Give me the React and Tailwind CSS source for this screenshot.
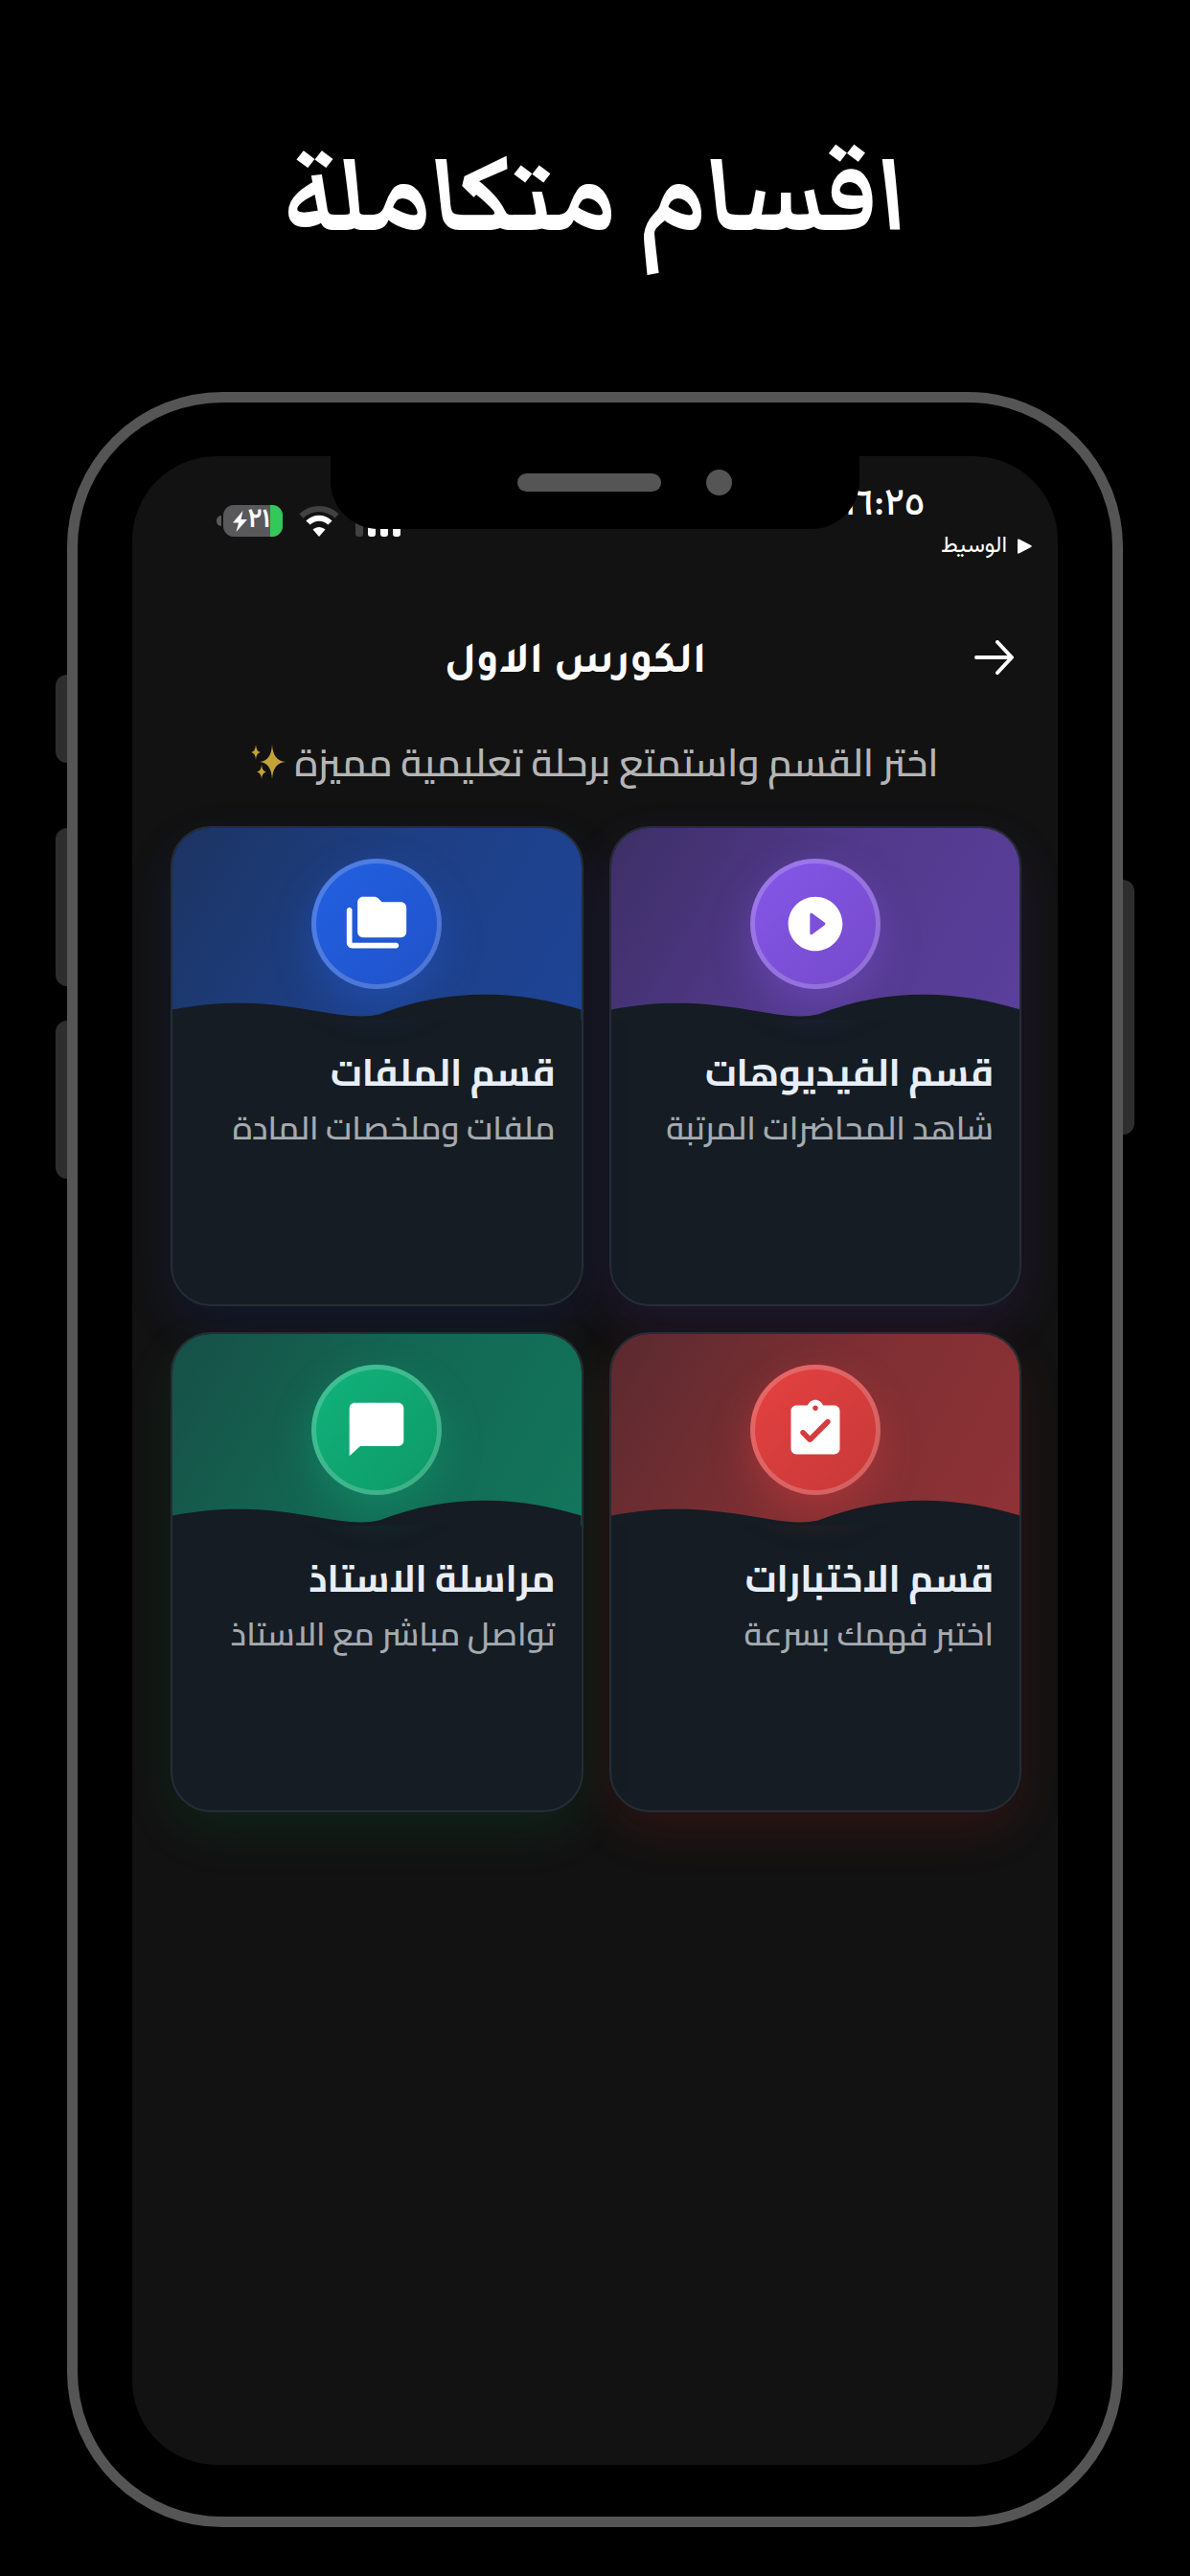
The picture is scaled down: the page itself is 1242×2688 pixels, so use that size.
const sections = [
  {
    id: 'videos',
    title: 'قسم الفيديوهات',
    text: 'شاهد المحاضرات المرتبة',
    glow: 'shadow-[0_20px_50px_rgba(124,58,237,0.13)]',
    header: 'from-[#3d2f66] via-[#52398b] to-[#5a3f9c]',
    circle: 'from-[#8557ea] to-[#7549c9] shadow-[0_16px_40px_rgba(132,86,230,0.35)]',
    icon: 'M12 2C6.48 2 2 6.48 2 12s4.48 10 10 10 10-4.48 10-10S17.52 2 12 2zm-2 13.5v-7c0-.41.47-.65.8-.4l4.67 3.5c.27.2.27.6 0 .8l-4.67 3.5c-.33.25-.8.01-.8-.4z'
  },
  {
    id: 'files',
    title: 'قسم الملفات',
    text: 'ملفات وملخصات المادة',
    glow: 'shadow-[0_20px_50px_rgba(37,70,235,0.13)]',
    header: 'from-[#1c3462] via-[#1e3f85] to-[#1e4496]',
    circle: 'from-[#2260e2] to-[#2052c8] shadow-[0_16px_40px_rgba(34,96,226,0.35)]',
    icon: 'M3 19h16.2c.55 0 1 .45 1 1s-.45 1-1 1H3c-1.1 0-2-.9-2-2V7c0-.55.45-1 1-1s1 .45 1 1v12zM23 6v9c0 1.1-.9 2-2 2H7c-1.1 0-2-.9-2-2V4c0-1.1.9-2 2-2h4.17c.53 0 1.04.21 1.41.59L14 4h7c1.1 0 2 .9 2 2z'
  },
  {
    id: 'exams',
    title: 'قسم الاختبارات',
    text: 'اختبر فهمك بسرعة',
    glow: 'shadow-[0_20px_50px_rgba(220,38,38,0.13)]',
    header: 'from-[#5a2a2f] via-[#7e2f33] to-[#8f3236]',
    circle: 'from-[#e64141] to-[#c63838] shadow-[0_16px_40px_rgba(228,64,64,0.35)]',
    icon: 'M19 3h-4.18C14.4 1.84 13.3 1 12 1s-2.4.84-2.82 2H5c-1.1 0-2 .9-2 2v14c0 1.1.9 2 2 2h14c1.1 0 2-.9 2-2V5c0-1.1-.9-2-2-2zm-7 0c.55 0 1 .45 1 1s-.45 1-1 1-1-.45-1-1 .45-1 1-1zm-2.71 13.29L6.7 13.7c-.39-.39-.39-1.02 0-1.41.39-.39 1.02-.39 1.41 0L10 14.17l5.88-5.88c.39-.39 1.02-.39 1.41 0 .39.39.39 1.02 0 1.41l-6.59 6.59c-.38.39-1.02.39-1.41 0z'
  },
  {
    id: 'messages',
    title: 'مراسلة الاستاذ',
    text: 'تواصل مباشر مع الاستاذ',
    glow: 'shadow-[0_20px_50px_rgba(5,150,80,0.13)]',
    header: 'from-[#165046] via-[#136853] to-[#12765b]',
    circle: 'from-[#11b37c] to-[#0d9968] shadow-[0_16px_40px_rgba(17,176,122,0.35)]',
    icon: 'M20 2H4c-1.1 0-2 .9-2 2v17.6L6 18h14c1.1 0 2-.9 2-2V4c0-1.1-.9-2-2-2z'
  }
]

function SectionCard({ section }) {
  return (
    <a
      href={`#${section.id}`}
      className={`block min-h-[501px] overflow-hidden rounded-[42px] border-2 border-[#262d36] bg-[#151c23] ${section.glow}`}
    >
      <div className={`relative h-[200px] bg-linear-120 pt-8 ${section.header}`}>
        <div className={`mx-auto flex size-[136px] items-center justify-center rounded-full border-[5px] border-white/20 bg-linear-to-br bg-origin-border ${section.circle}`}>
          <svg viewBox="0 0 24 24" className="size-[68px] fill-white">
            <path d={section.icon} />
          </svg>
        </div>
        <svg viewBox="0 0 427 32" preserveAspectRatio="none" className="absolute inset-x-0 bottom-0 h-8 w-full fill-[#151c23]">
          <path d="M0 21.5C110 0 170 37 216 26.5C290 -3 365 2 427 21.5V33H0Z" />
        </svg>
      </div>
      <div className="px-[27px] pt-6">
        <h2 className="text-[39px] leading-[62px] font-bold text-[#e8eef7]">{section.title}</h2>
        <p className="text-[34px] leading-[54px] font-semibold text-[#a5aab0]">{section.text}</p>
      </div>
    </a>
  )
}

function StatusBar() {
  return (
    <div dir="ltr" className="flex h-[127px] items-start justify-between pr-[27px] pl-[88px] text-white">
      <div className="flex items-center pt-[51px]">
        {/* Battery */}
        <div className="h-[11px] w-[5px] rounded-l-full bg-[#59595b]" />
        <div className="ml-[2px] flex h-[33px] w-[62px] items-center justify-end rounded-[11px] bg-[#59595b]">
          <svg viewBox="0 0 15 22" className="h-[22px] w-[15px] fill-white">
            <path d="M10.500 0 0 12.500H6L3.500 22 15 9H8.500Z" />
          </svg>
          <span className="font-['Vazirmatn','Noto_Sans_Arabic',sans-serif] text-[28px] leading-[33px] font-semibold">٢١</span>
          <div className="h-full w-[13px] rounded-r-[11px] bg-[#34c759]" />
        </div>

        {/* Wifi */}
        <svg viewBox="0 0 42 32" className="ml-[17px] h-8 w-[42px]" fill="none">
          <path d="M2.500 10.500C13 .5 29 .5 39.500 10.500" stroke="#414141" strokeWidth="6" />
          <path d="M9.500 17.500C16 11 26 11 32.500 17.500" stroke="#fff" strokeWidth="6" />
          <path d="M14.500 24.500C18.500 21 23.500 21 27.500 24.500L21 32Z" fill="#fff" />
        </svg>

        {/* Signal */}
        <div className="ml-[17px] flex h-8 items-end gap-[5px]">
          <div className="h-8 w-2 rounded-[3px] bg-[#414141]" />
          <div className="h-6 w-2 rounded-[3px] bg-white" />
          <div className="h-5 w-2 rounded-[3px] bg-white" />
          <div className="h-4 w-2 rounded-[3px] bg-white" />
        </div>
      </div>

      <div className="flex flex-col items-end pt-8 font-['Vazirmatn','Noto_Sans_Arabic',sans-serif]">
        <span className="mr-[112px] text-[39px] leading-10 font-medium">١٦:٢٥</span>
        <a href="#back" className="mt-1 flex items-center gap-[11px] text-2xl leading-9">
          الوسيط
          <svg viewBox="0 0 15 16" className="h-4 w-[15px] fill-white">
            <path d="M0 1.500Q0 0 1.500.500L14 7Q15.500 8 14 9L1.500 15.500Q0 16 0 14.500Z" />
          </svg>
        </a>
      </div>
    </div>
  )
}

export default function App() {
  return (
    <div dir="rtl" className="flex min-h-screen flex-col bg-black pb-[51px]">
      <h1 className="flex h-[409px] items-center justify-center pt-1 font-['Markazi_Text','Noto_Naskh_Arabic',serif] text-[139px] leading-none font-bold text-white">
        اقسام متكاملة
      </h1>

      {/* Phone frame */}
      <div className="relative mx-[70px] flex flex-1 flex-col rounded-[162px] border-[11px] border-[#555555] bg-black px-[57px] pt-14 pb-[54px]">
        {/* Side buttons */}
        <div className="absolute top-[284px] -left-[23px] h-[92px] w-3 rounded-l-[12px] bg-[#2e2e2e]" />
        <div className="absolute top-[444px] -left-[23px] h-[165px] w-3 rounded-l-[12px] bg-[#2e2e2e]" />
        <div className="absolute top-[645px] -left-[23px] h-[165px] w-3 rounded-l-[12px] bg-[#2e2e2e]" />
        <div className="absolute top-[498px] -right-[23px] h-[266px] w-3 rounded-r-[12px] bg-[#2e2e2e]" />

        <div className="relative flex-1 overflow-hidden rounded-[88px] bg-[#121212] font-['Cairo','Noto_Sans_Arabic',sans-serif]">
          <StatusBar />

          {/* Notch */}
          <div dir="ltr" className="absolute inset-x-0 top-0 mx-auto flex h-[76px] w-[552px] items-center gap-[47px] rounded-b-[50px] bg-black pb-[21px] pl-[195px]">
            <div className="h-[19px] w-[150px] rounded-full bg-[#555555]" />
            <div className="size-[27px] rounded-full bg-[#555555]" />
          </div>

          <header className="flex h-[166px] items-center px-[46px]">
            <button type="button" aria-label="رجوع" className="w-[41px]">
              <svg viewBox="0 0 41 36" className="h-9 w-[41px]" fill="none" stroke="#fff" strokeWidth="4" strokeLinecap="round" strokeLinejoin="round">
                <path d="M2 18H38M24 2 39 18 24 34" />
              </svg>
            </button>
            <h2 className="flex-1 pt-4 text-center font-['Tajawal','Cairo',sans-serif] text-[46px] leading-[60px] font-bold text-white">
              الكورس الاول
            </h2>
          </header>

          <p className="flex h-[93px] items-start justify-center gap-[9px] text-[40px] leading-[54px] font-semibold text-[#b5b5b5]">
            اختر القسم واستمتع برحلة تعليمية مميزة
            <svg viewBox="0 0 36 36" className="mt-2 size-9 fill-[#c4a237]">
              <path d="M22 0Q23 17 36 18Q23 19 22 36Q21 19 9 18Q21 17 22 0Z" />
              <path d="M5 0Q5.500 7.500 10 8Q5.500 8.500 5 16Q4.500 8.500 0 8Q4.500 7.500 5 0Z" />
              <path d="M11 21Q11.500 28 16 28.500Q11.500 29 11 36Q10.500 29 6 28.500Q10.500 28 11 21Z" />
            </svg>
          </p>

          <main className="grid grid-cols-2 gap-[27px] pr-[38px] pl-10">
            {sections.map((section) => (
              <SectionCard key={section.id} section={section} />
            ))}
          </main>
        </div>
      </div>
    </div>
  )
}
